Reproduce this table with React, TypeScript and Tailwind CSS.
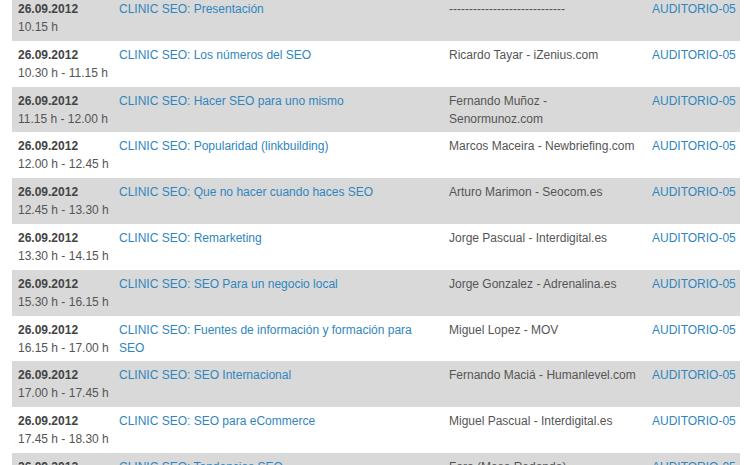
const rows = [
  { time: "10.15 h", title: "CLINIC SEO: Presentación", speaker: "-----------------------------" },
  { time: "10.30 h - 11.15 h", title: "CLINIC SEO: Los números del SEO", speaker: "Ricardo Tayar - iZenius.com" },
  { time: "11.15 h - 12.00 h", title: "CLINIC SEO: Hacer SEO para uno mismo", speaker: ["Fernando Muñoz -", "Senormunoz.com"] },
  { time: "12.00 h - 12.45 h", title: "CLINIC SEO: Popularidad (linkbuilding)", speaker: "Marcos Maceira - Newbriefing.com" },
  { time: "12.45 h - 13.30 h", title: "CLINIC SEO: Que no hacer cuando haces SEO", speaker: "Arturo Marimon - Seocom.es" },
  { time: "13.30 h - 14.15 h", title: "CLINIC SEO: Remarketing", speaker: "Jorge Pascual - Interdigital.es" },
  { time: "15.30 h - 16.15 h", title: "CLINIC SEO: SEO Para un negocio local", speaker: "Jorge Gonzalez - Adrenalina.es" },
  { time: "16.15 h - 17.00 h", title: ["CLINIC SEO: Fuentes de información y formación para", "SEO"], speaker: "Miguel Lopez - MOV" },
  { time: "17.00 h - 17.45 h", title: "CLINIC SEO: SEO Internacional", speaker: "Fernando Maciá - Humanlevel.com" },
  { time: "17.45 h - 18.30 h", title: "CLINIC SEO: SEO para eCommerce", speaker: "Miguel Pascual - Interdigital.es" },
  { time: "18.30 h - 19.15 h", title: "CLINIC SEO: Tendencias SEO", speaker: "Foro (Mesa Redonda)" },
];

function Lines({ v }: { v: string | string[] }) {
  if (Array.isArray(v)) {
    return (
      <>
        {v[0]}
        <br />
        {v[1]}
      </>
    );
  }
  return <>{v}</>;
}

export default function App() {
  return (
    <div className="bg-white w-[750px] h-[465px] overflow-hidden">
      <table
        className="-mt-[5px] ml-[12px] w-[728px] table-fixed border-collapse text-[12px] leading-[18px] text-[#555]"
        style={{ fontFamily: '"Liberation Sans", Arial, sans-serif' }}
      >
        <colgroup>
          <col className="w-[101px]" />
          <col className="w-[330px]" />
          <col className="w-[203px]" />
          <col className="w-[94px]" />
        </colgroup>
        <tbody>
          {rows.map((r, i) => (
            <tr key={i} className={i % 2 === 0 ? "bg-[#d9d9d9]" : "bg-white"}>
              <td className="h-[45.8px] align-top pl-[6px] pt-[5px] pb-[3px]">
                <div className="font-bold text-[#444]">26.09.2012</div>
                <div>{r.time}</div>
              </td>
              <td className="align-top pl-[6px] pt-[5px] pb-[3px]">
                <a className="text-[#2f86be]" href="#">
                  <Lines v={r.title} />
                </a>
              </td>
              <td className="align-top pl-[6px] pt-[5px] pb-[3px]">
                <Lines v={r.speaker} />
              </td>
              <td className="align-top pl-[6px] pt-[5px] pb-[3px]">
                <a className="text-[#2f86be]" href="#">
                  AUDITORIO-05
                </a>
              </td>
            </tr>
          ))}
        </tbody>
      </table>
    </div>
  );
}
